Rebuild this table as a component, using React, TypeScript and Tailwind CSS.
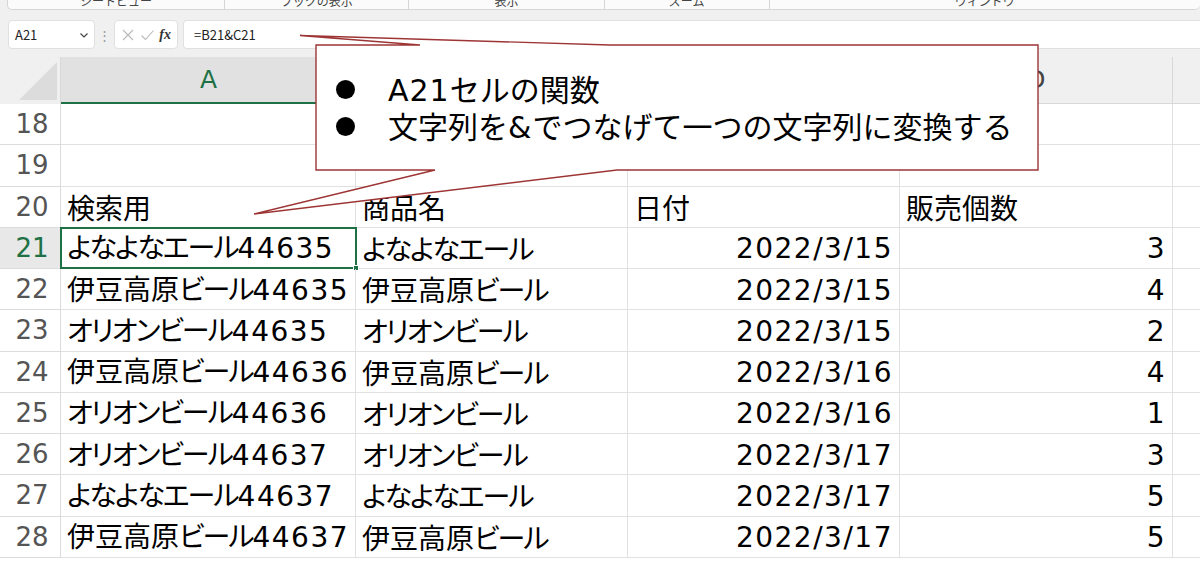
import React from "react";

const rows: [number, string, string, string, string][] = [
  [18, "", "", "", ""],
  [19, "", "", "", ""],
  [20, "検索用", "商品名", "日付", "販売個数"],
  [21, "よなよなエール44635", "よなよなエール", "2022/3/15", "3"],
  [22, "伊豆高原ビール44635", "伊豆高原ビール", "2022/3/15", "4"],
  [23, "オリオンビール44635", "オリオンビール", "2022/3/15", "2"],
  [24, "伊豆高原ビール44636", "伊豆高原ビール", "2022/3/16", "4"],
  [25, "オリオンビール44636", "オリオンビール", "2022/3/16", "1"],
  [26, "オリオンビール44637", "オリオンビール", "2022/3/17", "3"],
  [27, "よなよなエール44637", "よなよなエール", "2022/3/17", "5"],
  [28, "伊豆高原ビール44637", "伊豆高原ビール", "2022/3/17", "5"],
];

function Cell({ s, grid = true }: { s: string; grid?: boolean }) {
  const parts = s.split(/([\x00-\x7F]+|[\u3040-\u30FF]+)/).filter((p) => p !== "");
  return (
    <span>
      {parts.map((p, i) => {
        if (/^[\x00-\x7F]+$/.test(p))
          return (
            <span
              key={i}
              className={`font-['DejaVu_Sans',sans-serif] ${grid ? "tracking-[1.5px]" : "tracking-[1px]"}`}
            >
              {p}
            </span>
          );
        if (grid && /^[\u3040-\u30FF]+$/.test(p))
          return (
            <span key={i} className="tracking-[-2px]">
              {p}
            </span>
          );
        return <span key={i}>{p}</span>;
      })}
    </span>
  );
}

export default function App() {
  return (
    <div className="relative w-[1200px] h-[566px] overflow-hidden bg-white font-['Noto_Sans_CJK_JP',sans-serif]">
      {/* ribbon strip */}
      <div className="h-[10px] bg-[#f0f0f0] pl-[7px]">
        <div className="flex h-[10px] overflow-hidden rounded-b-[5px] border-b border-l border-[#d6d6d6] bg-[#fbfbfb] text-[12px] leading-[12px] text-[#444]">
          <div className="flex w-[238px] justify-center border-r border-[#d6d6d6]"><span className="-mt-[5px]">シートビュー</span></div>
          <div className="flex w-[202px] justify-center border-r border-[#d6d6d6]"><span className="-mt-[5px]">ブックの表示</span></div>
          <div className="flex w-[214px] justify-center border-r border-[#d6d6d6]"><span className="-mt-[5px]">表示</span></div>
          <div className="flex w-[181px] justify-center border-r border-[#d6d6d6]"><span className="-mt-[5px]">ズーム</span></div>
          <div className="flex w-[472px] justify-center"><span className="-mt-[5px]">ウィンドウ</span></div>
        </div>
      </div>

      {/* formula bar */}
      <div className="flex h-[47px] items-start bg-[#f0f0f0] pt-[10px]">
        <div className="ml-[8px] flex h-[29px] w-[87px] items-center justify-between rounded-[4px] border border-[#e0e0e0] bg-white pl-[6px] pr-[5px] text-[13px] text-[#222]">
          <span>A21</span>
          <svg width="10" height="10" viewBox="0 0 10 10" className="text-[#444]">
            <path d="M1.5 3.5 L5 7 L8.5 3.5" fill="none" stroke="currentColor" strokeWidth="1.2" />
          </svg>
        </div>
        <div className="flex h-[29px] w-[19px] items-center justify-center text-[13px] text-[#999]">⋮</div>
        <div className="flex h-[29px] w-[64px] items-center justify-between rounded-[4px] border border-[#e0e0e0] bg-white px-[6px]">
          <svg width="14" height="14" viewBox="0 0 14 14">
            <path d="M2 2 L12 12 M12 2 L2 12" stroke="#b8b8b8" strokeWidth="1.1" fill="none" />
          </svg>
          <svg width="15" height="14" viewBox="0 0 15 14">
            <path d="M1.5 7.5 L5.5 11.5 L13.5 2.5" stroke="#b8b8b8" strokeWidth="1.1" fill="none" />
          </svg>
          <span className="font-['Liberation_Serif',serif] text-[14px] font-bold italic text-[#333]">fx</span>
        </div>
        <div className="ml-[5px] flex h-[29px] flex-1 items-center rounded-l-[4px] border border-r-0 border-[#e0e0e0] bg-white pl-[10px] text-[13px] text-[#222]">
          =B21&amp;C21
        </div>
      </div>

      {/* column header */}
      <div className="flex h-[47px] bg-[#f0f0f0]">
        <div className="relative w-[61px] border-r border-[#d8d8d8]">
          <svg className="absolute left-0 top-0" width="61" height="47" viewBox="0 0 61 47">
            <polygon points="19,43 57,43 57,5" fill="#dcdcdc" />
          </svg>
        </div>
        <div className="flex w-[295px] items-center justify-center border-b-2 border-[#1e7145] bg-[#e1e1e1] font-['DejaVu_Sans',sans-serif] text-[25px] text-[#1e7145]">A</div>
        <div className="w-[272px] border-r border-b border-[#d8d8d8]" />
        <div className="w-[272px] border-r border-b border-[#d8d8d8]" />
        <div className="flex w-[273px] items-center justify-center border-r border-b border-[#d8d8d8] font-['DejaVu_Sans',sans-serif] text-[25px] text-[#444]">D</div>
        <div className="flex-1 border-b border-[#d8d8d8]" />
      </div>

      {/* rows */}
      {rows.map(([n, a, b, c, d]) => {
        const sel = n === 21;
        const hdr = n === 20;
        return (
          <div
            key={n}
            className="flex h-[41.25px] text-[28px] leading-none text-black [font-feature-settings:'palt']"
          >
            <div
              className={`flex w-[61px] items-center justify-center border-r border-b border-[#dcdcdc] pl-[4px] font-['DejaVu_Sans',sans-serif] text-[26px] ${
                sel ? "bg-[#e8e8e8] text-[#1e7145]" : "bg-white text-[#555]"
              }`}
            >
              {n}
            </div>
            <div className="relative flex w-[295px] items-center whitespace-nowrap border-r border-b border-[#e1e1e1] pl-[6px]">
              <Cell s={a} />
              {sel && (
                <div className="absolute -left-[1px] -top-[1px] h-[42.5px] w-[297px] border-2 border-[#1e7145]">
                  <div className="absolute -bottom-[4px] -right-[4px] h-[6px] w-[6px] border border-white bg-[#1e7145]" />
                </div>
              )}
            </div>
            <div className="flex w-[272px] items-center whitespace-nowrap border-r border-b border-[#e1e1e1] pl-[6px]">
              <Cell s={b} />
            </div>
            <div
              className={`flex w-[272px] items-center whitespace-nowrap border-r border-b border-[#e1e1e1] ${
                hdr ? "pl-[6px]" : "justify-end pr-[6px]"
              }`}
            >
              <Cell s={c} />
            </div>
            <div
              className={`flex w-[273px] items-center whitespace-nowrap border-r border-b border-[#e1e1e1] ${
                hdr ? "pl-[6px]" : "justify-end pr-[6px]"
              }`}
            >
              <Cell s={d} />
            </div>
            <div className="flex-1 border-b border-[#e1e1e1]" />
          </div>
        );
      })}

      {/* callout */}
      <svg className="pointer-events-none absolute left-0 top-0" width="1200" height="566" viewBox="0 0 1200 566">
        <polygon
          points="316,45 420,45 300,35.5 610,45 1038,45 1038,170 617,170 254,214 435,170 316,170"
          fill="white"
          stroke="#9e3535"
          strokeWidth="1.4"
          strokeLinejoin="miter"
        />
      </svg>
      <div className="absolute left-[336px] top-[71px] flex flex-col text-[30px] leading-[37px] text-black">
        <div className="flex h-[37px] items-center">
          <span className="mr-[33px] inline-block h-[19px] w-[19px] rounded-full bg-black" />
          <Cell s="A21セルの関数" grid={false} />
        </div>
        <div className="flex h-[37px] items-center">
          <span className="mr-[33px] inline-block h-[19px] w-[19px] rounded-full bg-black" />
          <Cell s="文字列を&でつなげて一つの文字列に変換する" grid={false} />
        </div>
      </div>
    </div>
  );
}
